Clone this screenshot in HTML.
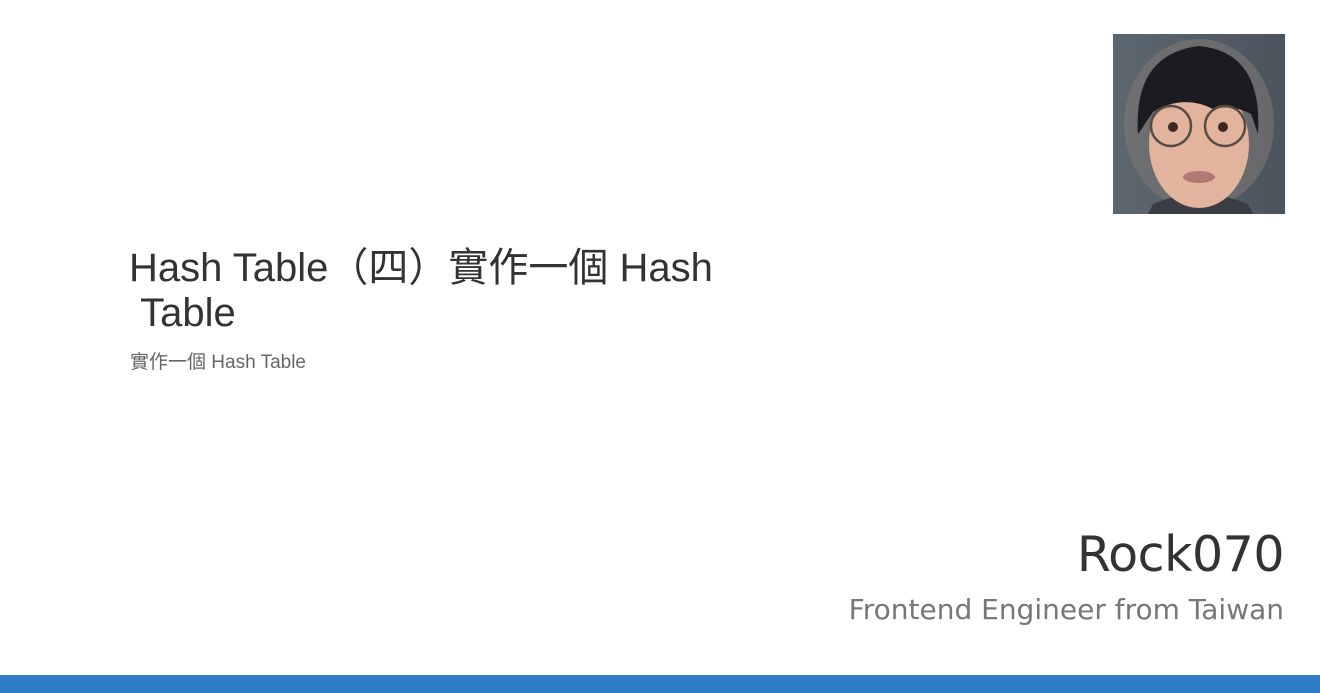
<!DOCTYPE html>
<html><head><meta charset="utf-8"><style>
body{margin:0;width:1320px;height:693px;background:#fff;position:relative;overflow:hidden;font-family:"Liberation Sans","Noto Sans CJK TC",sans-serif}
.t{position:absolute;left:129px;top:246px;width:620px;font-size:40px;line-height:45px;color:#333}
.s{position:absolute;left:130px;top:347px;font-size:19px;color:#666}
.n{position:absolute;right:36px;top:526px;font-size:49px;color:#333;font-family:"DejaVu Sans",sans-serif;letter-spacing:-0.5px}
.g{position:absolute;right:36px;top:593px;font-size:28px;color:#777;font-family:"DejaVu Sans",sans-serif;letter-spacing:0px}
.bar{position:absolute;left:0;top:675px;width:1320px;height:18px;background:#2f7bc4}
svg{position:absolute;left:1113px;top:34px}
</style></head><body>
<svg width="172" height="180" viewBox="0 0 172 180">
<defs><linearGradient id="bg" x1="0" x2="1"><stop offset="0" stop-color="#5d6770"/><stop offset="1" stop-color="#4b545c"/></linearGradient></defs>
<rect width="172" height="180" fill="url(#bg)"/>
<ellipse cx="86" cy="90" rx="75" ry="85" fill="#7a7775" opacity=".6"/>
<path d="M40 170 Q86 150 135 170 L140 180 L35 180Z" fill="#3a3d44"/>
<ellipse cx="86" cy="110" rx="50" ry="64" fill="#e2b49e"/>
<path d="M25 100 Q20 20 86 12 Q150 18 145 100 L138 80 Q120 70 100 75 Q70 60 40 78 Z" fill="#1c1c20"/>
<circle cx="58" cy="92" r="20" fill="none" stroke="#5a4a44" stroke-width="2.5"/>
<circle cx="112" cy="92" r="20" fill="none" stroke="#5a4a44" stroke-width="2.5"/>
<circle cx="60" cy="93" r="5" fill="#3a2a22"/><circle cx="110" cy="93" r="5" fill="#3a2a22"/>
<ellipse cx="86" cy="143" rx="16" ry="6" fill="#b07a72"/>
</svg>
<div class="t">Hash Table（四）實作一個 Hash<br>&nbsp;Table</div>
<div class="s">實作一個 Hash Table</div>
<div class="n">Rock070</div>
<div class="g">Frontend Engineer from Taiwan</div>
<div class="bar"></div>
</body></html>
